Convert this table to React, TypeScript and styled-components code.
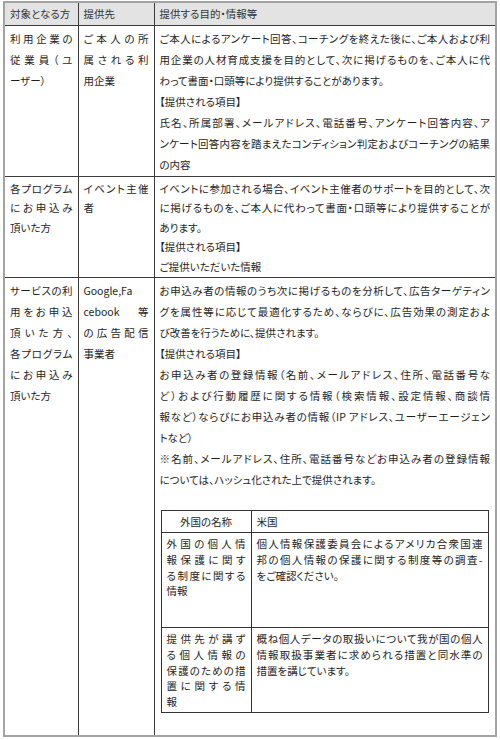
import styled, { createGlobalStyle } from "styled-components";

const GlobalStyle = createGlobalStyle`
  body {
    margin: 0;
    background: #ffffff;
    font-family: "Noto Sans CJK JP", "Noto Sans", sans-serif;
    color: #1e1e1e;
  }
`;

const Page = styled.div`
  padding: 1px 3px 4px 3px;
`;

const Table = styled.table`
  width: 494px;
  table-layout: fixed;
  border-collapse: collapse;
  border: 2px solid #a3a3a3;
  font-size: 10.5px;
  font-feature-settings: "palt";
`;

const HeadCell = styled.th`
  background: #e3e3e3;
  border: 1px solid #3a3a3a;
  border-top: 2px solid #a3a3a3;
  height: 22px;
  padding: 0 5px;
  font-size: 10.5px;
  font-weight: normal;
  color: #333333;
  text-align: left;
  vertical-align: middle;
  line-height: 20px;
  white-space: nowrap;
`;

const Cell = styled.td<{ $tall?: boolean; $lh: number }>`
  border: 1px solid #3a3a3a;
  padding: 2px 5px ${(p) => (p.$tall ? "22px" : "1px")} 5px;
  vertical-align: top;
  line-height: ${(p) => p.$lh}px;
`;

const Line = styled.span<{ $fill: boolean }>`
  display: block;
  white-space: nowrap;
  text-align: justify;
  text-align-last: ${(p) => (p.$fill ? "justify" : "left")};
`;

const Inner = styled.table`
  width: 328px;
  margin: 20px 0 0 1px;
  table-layout: fixed;
  border-collapse: collapse;
  border: 1px solid #333333;
  font-size: 10.5px;
`;

const InnerHead = styled.td<{ $center?: boolean }>`
  border: 1px solid #333333;
  height: 21px;
  padding: 0 5px;
  line-height: 18px;
  text-align: ${(p) => (p.$center ? "center" : "left")};
  vertical-align: middle;
`;

const InnerCell = styled.td<{ $h: number }>`
  border: 1px solid #333333;
  height: ${(p) => p.$h}px;
  padding: 3px 5px 0 5px;
  line-height: 15.8px;
  vertical-align: top;
`;

const Lines = ({ lines }: { lines: string[] }) => (
  <>
    {lines.map((l, i) => (
      <Line key={i} $fill={i < lines.length - 1}>
        {l}
      </Line>
    ))}
  </>
);

const Paras = ({ paras }: { paras: string[][] }) => (
  <>
    {paras.map((p, i) => (
      <Lines key={i} lines={p} />
    ))}
  </>
);

const rows = [
  {
    lh: 21,
    who: ["利用企業の", "従業員（ユ", "ーザー）"],
    to: ["ご本人の所", "属される利", "用企業"],
    body: [
      [
        "ご本人によるアンケート回答、コーチングを終えた後に、ご本人および利",
        "用企業の人材育成支援を目的として、次に掲げるものを、ご本人に代",
        "わって書面・口頭等により提供することがあります。",
      ],
      ["【提供される項目】"],
      [
        "氏名、所属部署、メールアドレス、電話番号、アンケート回答内容、ア",
        "ンケート回答内容を踏まえたコンディション判定およびコーチングの結果",
        "の内容",
      ],
    ],
  },
  {
    lh: 19.4,
    who: ["各プログラム", "にお申込み", "頂いた方"],
    to: ["イベント主催", "者"],
    body: [
      [
        "イベントに参加される場合、イベント主催者のサポートを目的として、次",
        "に掲げるものを、ご本人に代わって書面・口頭等により提供することが",
        "あります。",
      ],
      ["【提供される項目】"],
      ["ご提供いただいた情報"],
    ],
  },
];

const adBody = [
  [
    "お申込み者の情報のうち次に掲げるものを分析して、広告ターゲティン",
    "グを属性等に応じて最適化するため、ならびに、広告効果の測定およ",
    "び改善を行うために、提供されます。",
  ],
  ["【提供される項目】"],
  [
    "お申込み者の登録情報（名前、メールアドレス、住所、電話番号な",
    "ど）および行動履歴に関する情報（検索情報、設定情報、商談情",
    "報など）ならびにお申込み者の情報（IP アドレス、ユーザーエージェン",
    "トなど）",
  ],
  [
    "※名前、メールアドレス、住所、電話番号などお申込み者の登録情報",
    "については、ハッシュ化された上で提供されます。",
  ],
];

export default function App() {
  return (
    <Page>
      <GlobalStyle />
      <Table>
        <colgroup>
          <col style={{ width: 74 }} />
          <col style={{ width: 76 }} />
          <col />
        </colgroup>
        <thead>
          <tr>
            <HeadCell>対象となる方</HeadCell>
            <HeadCell>提供先</HeadCell>
            <HeadCell>提供する目的・情報等</HeadCell>
          </tr>
        </thead>
        <tbody>
          {rows.map((r, i) => (
            <tr key={i}>
              <Cell $lh={r.lh}>
                <Lines lines={r.who} />
              </Cell>
              <Cell $lh={r.lh}>
                <Lines lines={r.to} />
              </Cell>
              <Cell $lh={r.lh}>
                <Paras paras={r.body} />
              </Cell>
            </tr>
          ))}
          <tr>
            <Cell $lh={21}>
              <Lines
                lines={[
                  "サービスの利",
                  "用をお申込",
                  "頂いた方、",
                  "各プログラム",
                  "にお申込み",
                  "頂いた方",
                ]}
              />
            </Cell>
            <Cell $lh={21}>
              <Lines lines={["Google,Fa", "cebook 等", "の広告配信", "事業者"]} />
            </Cell>
            <Cell $lh={21} $tall>
              <Paras paras={adBody} />
              <Inner>
                <colgroup>
                  <col style={{ width: 90 }} />
                  <col />
                </colgroup>
                <tbody>
                  <tr>
                    <InnerHead $center>外国の名称</InnerHead>
                    <InnerHead>米国</InnerHead>
                  </tr>
                  <tr>
                    <InnerCell $h={91}>
                      <Lines lines={["外国の個人情", "報保護に関す", "る制度に関する", "情報"]} />
                    </InnerCell>
                    <InnerCell $h={91}>
                      <Paras
                        paras={[
                          [
                            "個人情報保護委員会によるアメリカ合衆国連",
                            "邦の個人情報の保護に関する制度等の調査-",
                            "をご確認ください。",
                          ],
                        ]}
                      />
                    </InnerCell>
                  </tr>
                  <tr>
                    <InnerCell $h={81}>
                      <Lines
                        lines={["提供先が講ず", "る個人情報の", "保護のための措", "置に関する情", "報"]}
                      />
                    </InnerCell>
                    <InnerCell $h={81}>
                      <Paras
                        paras={[
                          [
                            "概ね個人データの取扱いについて我が国の個人",
                            "情報取扱事業者に求められる措置と同水準の",
                            "措置を講じています。",
                          ],
                        ]}
                      />
                    </InnerCell>
                  </tr>
                </tbody>
              </Inner>
            </Cell>
          </tr>
        </tbody>
      </Table>
    </Page>
  );
}
